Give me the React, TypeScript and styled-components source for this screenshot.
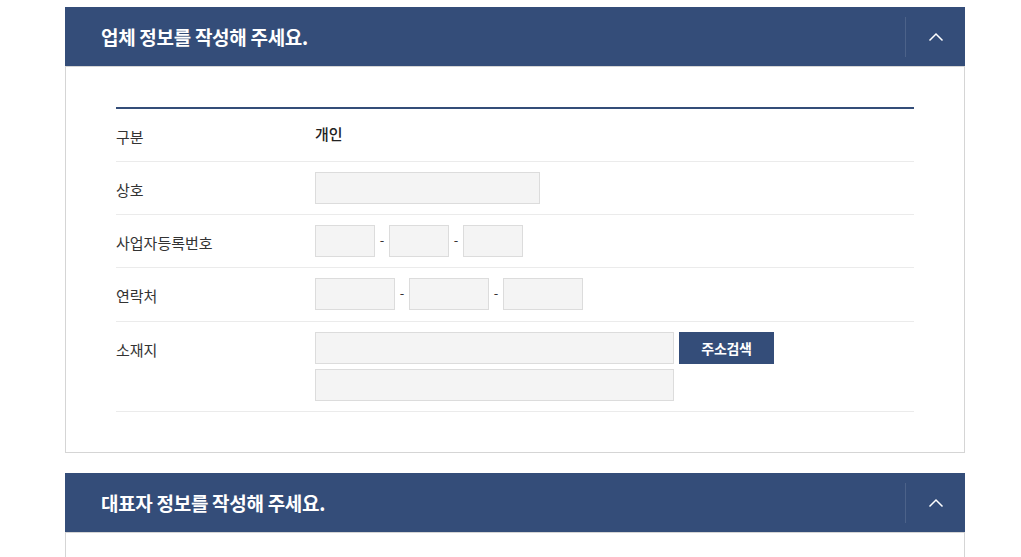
import React from 'react'
import styled, { createGlobalStyle } from 'styled-components'

const GlobalStyle = createGlobalStyle`
    html, body {
        margin: 0;
        padding: 0;
        background: #fff;
    }
    body {
        font-family: "Noto Sans CJK KR", "Noto Sans", sans-serif;
        color: #333;
    }
`

const NAVY = '#344d79'

const Page = styled.div`
    padding: 7px 56px 0 65px;
    display: flex;
    flex-direction: column;
    gap: 20px;
`

const Panel = styled.section`
    width: 900px;
`

const PanelHeader = styled.div`
    display: flex;
    align-items: center;
    height: 59px;
    background-color: ${NAVY};
`

const PanelTitle = styled.h2`
    flex: 1;
    margin: 0;
    padding-left: 36px;
    font-size: 19px;
    font-weight: 700;
    letter-spacing: -0.3px;
    color: #fff;
`

const ToggleButton = styled.button`
    display: flex;
    align-items: center;
    justify-content: center;
    width: 60px;
    height: 40px;
    padding: 0;
    border: 0;
    border-left: 1px solid rgba(255, 255, 255, 0.12);
    background: transparent;
    cursor: pointer;
`

const PanelBody = styled.div`
    padding: 40px 50px;
    border: 1px solid #d5d5d5;
`

const FormTable = styled.div`
    border-top: 2px solid ${NAVY};
`

const Row = styled.div<{ $tall?: boolean }>`
    display: grid;
    grid-template-columns: 199px 1fr;
    padding: 10px 0 ${p => (p.$tall ? 11 : 10)}px;
    border-bottom: 1px solid #ebebeb;
`

const Label = styled.div`
    position: relative;
    top: 2px;
    height: 32px;
    font-size: 15px;
    line-height: 32px;
    color: #333;
`

const Value = styled.div`
    position: relative;
    top: -1px;
    height: 32px;
    font-size: 15px;
    line-height: 32px;
    font-weight: 500;
    color: #222;
`

const Fields = styled.div`
    display: flex;
    flex-direction: column;
    gap: 5px;
`

const FieldLine = styled.div`
    display: flex;
    align-items: center;
`

const Input = styled.input<{ $w: number }>`
    box-sizing: border-box;
    width: ${p => p.$w}px;
    height: 32px;
    margin: 0;
    padding: 0 8px;
    border: 1px solid #dcdcdc;
    background-color: #f4f4f4;
    font-family: inherit;
    font-size: 14px;
    outline: none;
`

const Dash = styled.span`
    width: 14px;
    text-align: center;
    font-size: 13px;
    color: #333;
    position: relative;
    top: -2px;
`

const SearchButton = styled.button`
    width: 95px;
    height: 32px;
    margin-left: 5px;
    padding: 0;
    border: 0;
    background-color: ${NAVY};
    color: #fff;
    font-family: inherit;
    font-size: 14px;
    font-weight: 700;
    letter-spacing: -0.3px;
    cursor: pointer;
`

function Chevron() {
    return (
        <svg width="16" height="10" viewBox="0 0 16 10" fill="none">
            <path d="M1.5 8.5 L8 2 L14.5 8.5" stroke="#fff" strokeWidth="1.5" />
        </svg>
    )
}

function SplitInputs({ width }: { width: number }) {
    return (
        <FieldLine>
            <Input $w={width} />
            <Dash>-</Dash>
            <Input $w={width} />
            <Dash>-</Dash>
            <Input $w={width} />
        </FieldLine>
    )
}

export default function App() {
    return (
        <Page>
            <GlobalStyle />
            <Panel>
                <PanelHeader>
                    <PanelTitle>업체 정보를 작성해 주세요.</PanelTitle>
                    <ToggleButton aria-label="접기">
                        <Chevron />
                    </ToggleButton>
                </PanelHeader>
                <PanelBody>
                    <FormTable>
                        <Row>
                            <Label>구분</Label>
                            <Value>개인</Value>
                        </Row>
                        <Row>
                            <Label>상호</Label>
                            <FieldLine>
                                <Input $w={225} />
                            </FieldLine>
                        </Row>
                        <Row>
                            <Label>사업자등록번호</Label>
                            <SplitInputs width={60} />
                        </Row>
                        <Row $tall>
                            <Label>연락처</Label>
                            <SplitInputs width={80} />
                        </Row>
                        <Row>
                            <Label>소재지</Label>
                            <Fields>
                                <FieldLine>
                                    <Input $w={359} />
                                    <SearchButton>주소검색</SearchButton>
                                </FieldLine>
                                <FieldLine>
                                    <Input $w={359} />
                                </FieldLine>
                            </Fields>
                        </Row>
                    </FormTable>
                </PanelBody>
            </Panel>
            <Panel>
                <PanelHeader>
                    <PanelTitle>대표자 정보를 작성해 주세요.</PanelTitle>
                    <ToggleButton aria-label="접기">
                        <Chevron />
                    </ToggleButton>
                </PanelHeader>
                <PanelBody />
            </Panel>
        </Page>
    )
}
